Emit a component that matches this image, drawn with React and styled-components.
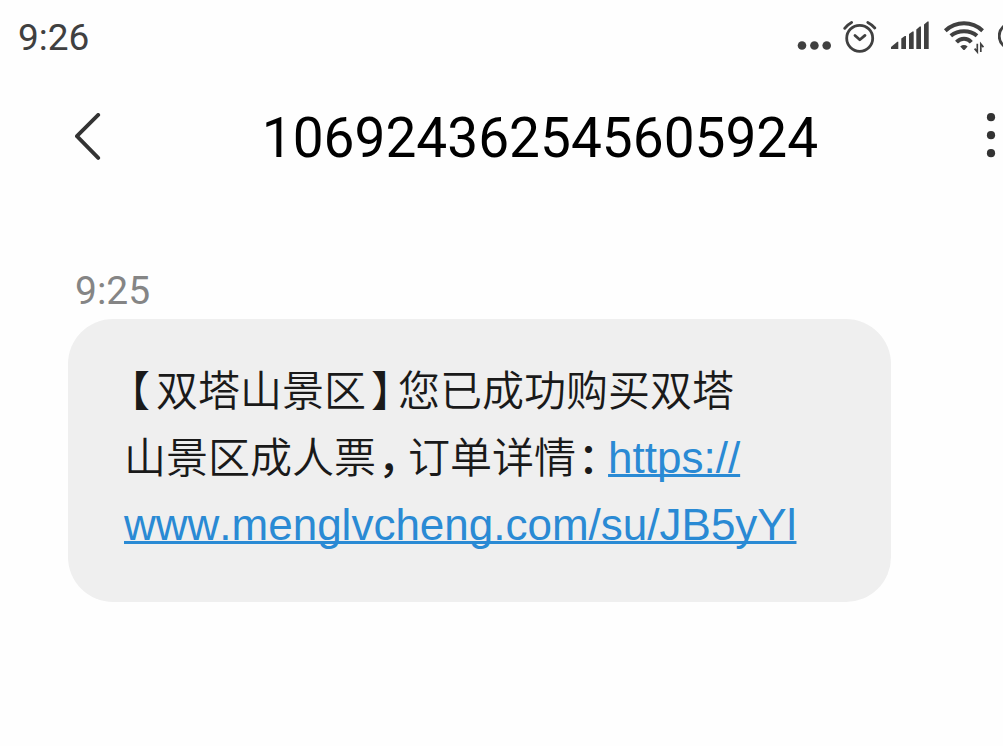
import styled, { createGlobalStyle } from 'styled-components'

const GlobalStyle = createGlobalStyle`
  * {
    box-sizing: border-box;
  }
  body {
    margin: 0;
    background-color: #fefefe;
    font-family: Roboto, 'Noto Sans CJK SC', sans-serif;
  }
`
const StatusBar = styled.div`
  display: flex;
  align-items: center;
  justify-content: space-between;
  height: 76px;
  padding-left: 18px;
  color: #404040;
`
const Clock = styled.time`
  font-size: 37px;
  line-height: 56px;
`
const StatusIcons = styled.div`
  display: flex;
  align-items: center;
  gap: 14px;
`
const Icon = styled.svg`
  display: block;
  flex: none;
`
const Header = styled.header`
  display: flex;
  align-items: center;
  height: 124px;
  padding-left: 75px;
`
const IconButton = styled.button`
  display: flex;
  justify-content: center;
  flex: none;
  width: ${(props) => props.$width};
  padding: 0;
  border: 0;
  background-color: transparent;
  color: #333;
  cursor: pointer;
`
const Title = styled.h1`
  flex: 1;
  margin: 0;
  text-align: center;
  font-size: 55px;
  font-weight: 400;
  line-height: 64px;
  color: #000;
`
const Thread = styled.main`
  padding: 63px 112px 40px 68px;
`
const SentAt = styled.time`
  display: block;
  padding-left: 7px;
  font-size: 39px;
  font-weight: 400;
  line-height: 56px;
  color: #858585;
`
const Bubble = styled.p`
  margin: 0;
  padding: 35px 56px 47px;
  border-radius: 45px;
  background-color: #efefef;
  font-family: 'Noto Sans CJK SC', sans-serif;
  font-size: 42px;
  font-weight: 350;
  line-height: 67px;
  color: #1a1a1a;
`
const Mark = styled.span`
  padding: ${(props) => (props.$point ? '0 9px 0 2px' : '0 6px 0 5px')};
  font-feature-settings: 'halt';
  font-weight: ${(props) => (props.$point ? 500 : 350)};
`
const MessageLink = styled.a`
  font-family: 'Liberation Sans', sans-serif;
  font-size: 44px;
  font-weight: 400;
  font-kerning: none;
  line-height: 50px;
  color: #2a8ad4;
  text-decoration: underline;
  text-decoration-thickness: 3px;
  text-underline-offset: 1px;
  text-decoration-skip-ink: none;
`

const MoreIcon = () => (
  <Icon width="34" height="40" viewBox="795 18 34 40" fill="currentColor" overflow="visible">
    <circle cx="802" cy="45.5" r="4.3" />
    <circle cx="814.4" cy="45.5" r="4.3" />
    <circle cx="826.7" cy="45.5" r="4.3" />
  </Icon>
)

const AlarmIcon = () => (
  <Icon
    width="34"
    height="40"
    viewBox="843 18 34 40"
    fill="none"
    stroke="currentColor"
    strokeWidth="2.8"
    strokeLinecap="round"
    strokeLinejoin="round">
    <circle cx="859.7" cy="38.3" r="13" />
    <path d="M844.7 28.3Q847.5 24.6 851.6 22.4M867.8 22.4Q872 24.6 874.8 28" />
    <path d="M855 35.5L859.8 39.8L865 35.4" />
  </Icon>
)

const SignalIcon = () => (
  <Icon width="38" height="40" viewBox="891 18 38 40" fill="currentColor">
    <path d="M891 49V47L897.3 41.8H898.3V49Z" />
    <path d="M901.3 49V38.5L904.8 36H906V49Z" />
    <path d="M909 49V34L912.5 31.4H913.7V49Z" />
    <path d="M916.3 49V29.5L919.8 26.6H921V49Z" />
    <path d="M924 49V24.5L927.5 21.4H928.7V49Z" />
  </Icon>
)

const WifiIcon = () => (
  <Icon
    width="41"
    height="40"
    viewBox="943 18 41 40"
    fill="none"
    stroke="currentColor"
    strokeWidth="4">
    <path d="M945.3 30.7Q953.5 23.3 964 23.3T982.6 30.7" />
    <path d="M950.8 35.8Q956.5 31.2 964 31.2T977 35.8" />
    <path d="M956.5 42.2Q959.7 38.8 964 38.8T971.3 42.2" />
    <path
      d="M960.2 46.4Q964 43.6 967.6 46.4L965 49.4Q964 50.4 963 49.4Z"
      fill="currentColor"
      stroke="none"
    />
    <path d="M977.3 43.8V51.8L974.6 48.6M980.8 52V44L983.4 47.2" strokeWidth="1.7" />
  </Icon>
)

const BatteryIcon = () => (
  <Icon
    width="5"
    height="40"
    viewBox="998 18 5 40"
    fill="none"
    stroke="currentColor"
    strokeWidth="2.8">
    <circle cx="1012" cy="36" r="12.8" />
  </Icon>
)

const App = () => {
  return (
    <>
      <GlobalStyle />
      <StatusBar>
        <Clock>9:26</Clock>
        <StatusIcons>
          <MoreIcon />
          <AlarmIcon />
          <SignalIcon />
          <WifiIcon />
          <BatteryIcon />
        </StatusIcons>
      </StatusBar>
      <Header>
        <IconButton
          $width="26px"
          aria-label="返回">
          <Icon
            width="26"
            height="50"
            viewBox="0 0 26 50"
            fill="none"
            stroke="currentColor"
            strokeWidth="3.8"
            strokeLinecap="round"
            strokeLinejoin="round">
            <path d="M23.2 1.9L1.9 23.2L23.2 44.9" />
          </Icon>
        </IconButton>
        <Title>106924362545605924</Title>
        <IconButton
          $width="24px"
          aria-label="更多">
          <Icon width="24" height="50" viewBox="0 0 24 50" fill="currentColor">
            <circle cx="12" cy="4.2" r="4.1" />
            <circle cx="12" cy="22.2" r="4.1" />
            <circle cx="12" cy="40.2" r="4.1" />
          </Icon>
        </IconButton>
      </Header>
      <Thread>
        <SentAt>9:25</SentAt>
        <Bubble>
          <Mark>【</Mark>双塔山景区<Mark>】</Mark>您已成功购买双塔
          <br />
          山景区成人票<Mark $point>，</Mark>订单详情<Mark $point>：</Mark>
          <MessageLink href="https://www.menglvcheng.com/su/JB5yYl">
            https://
            <br />
            www.menglvcheng.com/su/JB5yYl
          </MessageLink>
        </Bubble>
      </Thread>
    </>
  )
}

export default App
